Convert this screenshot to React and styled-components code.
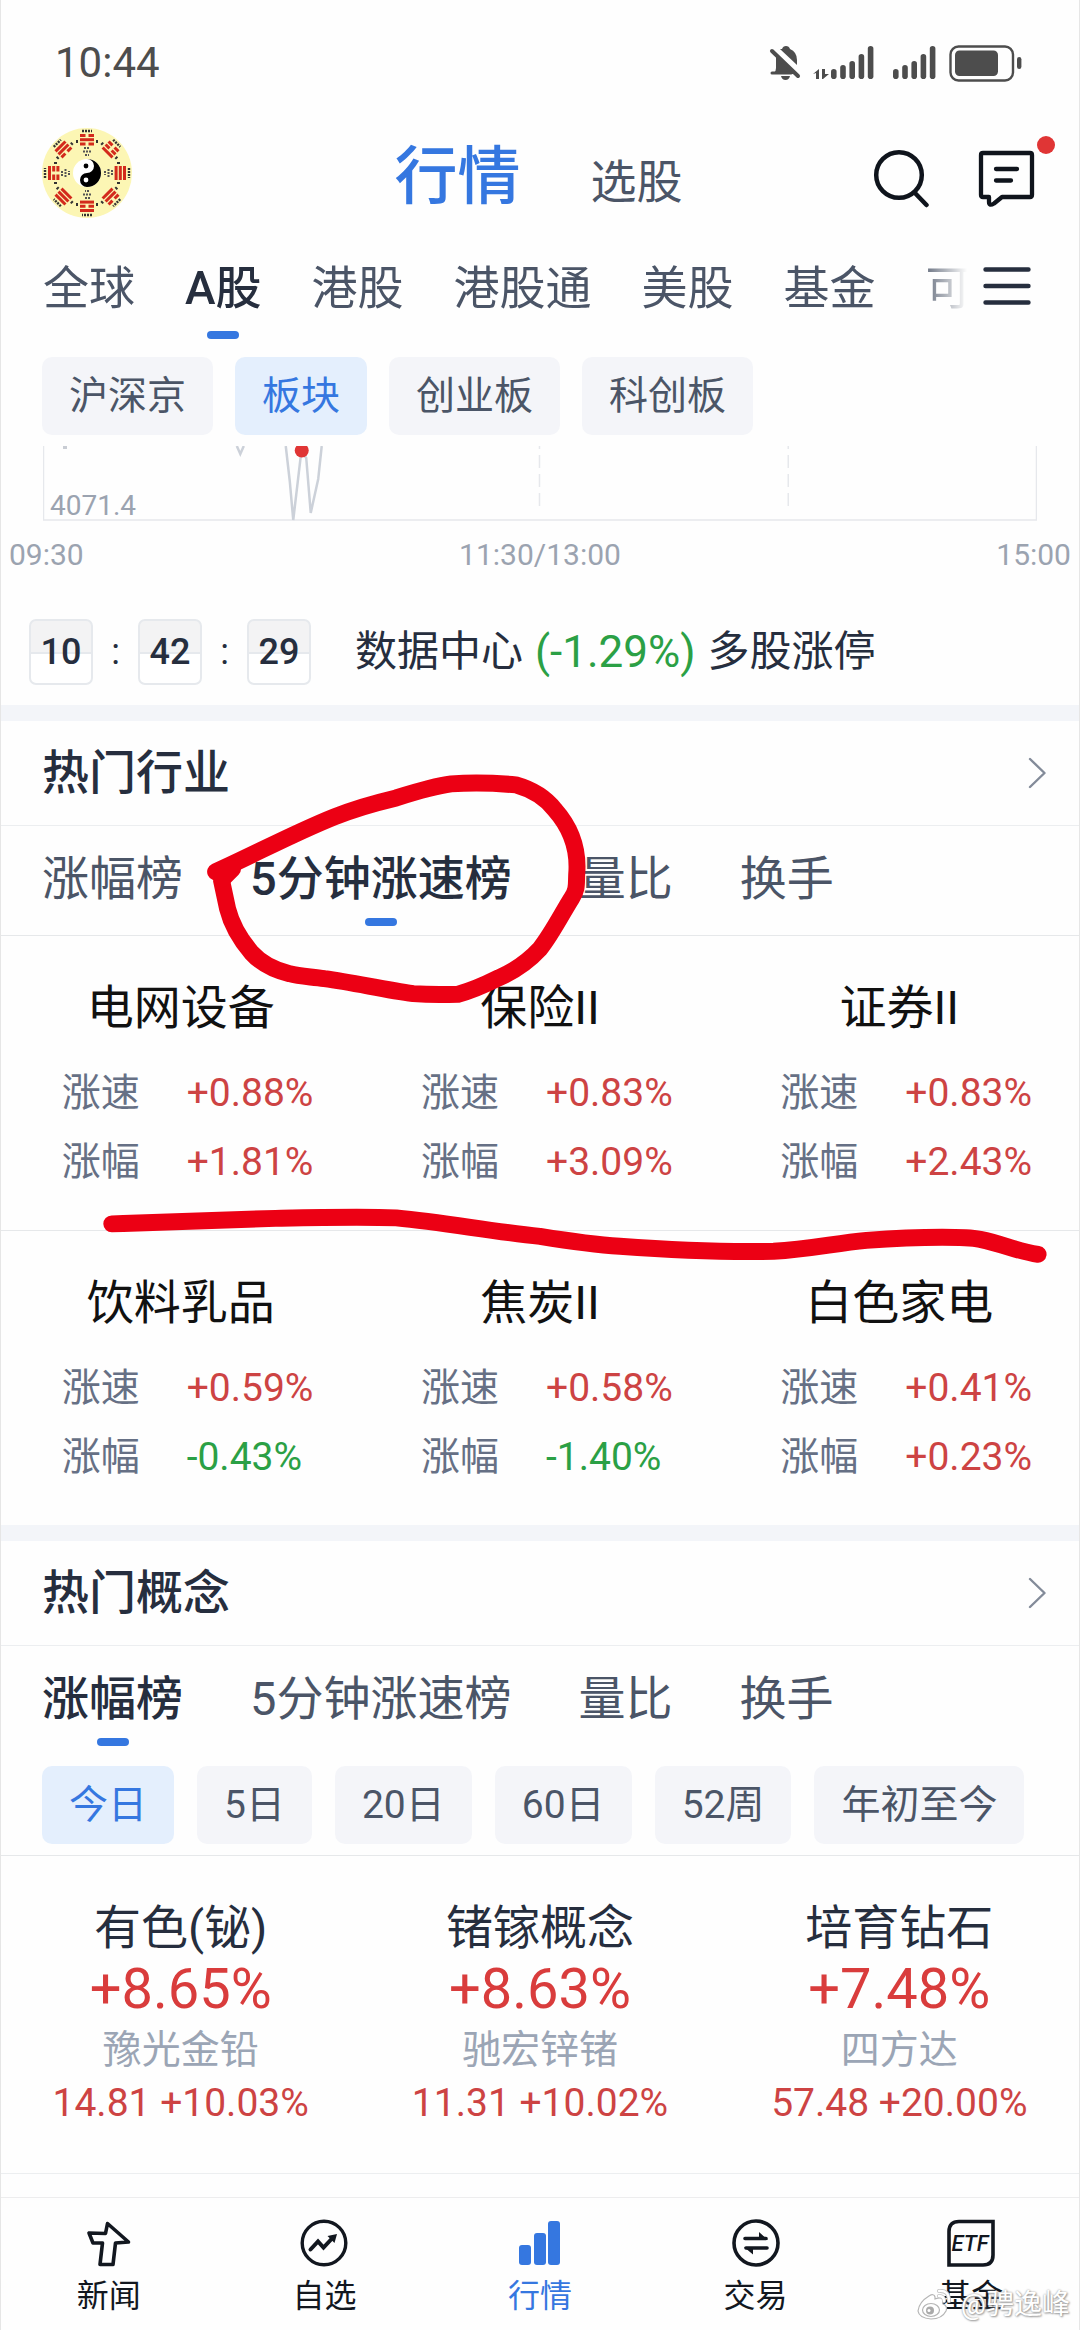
import styled, { createGlobalStyle } from "styled-components";

const markets = ["全球", "A股", "港股", "港股通", "美股", "基金", "可"];
const boards = ["沪深京", "板块", "创业板", "科创板"];
const rankings = ["涨幅榜", "5分钟涨速榜", "量比", "换手"];
const periods = ["今日", "5日", "20日", "60日", "52周", "年初至今"];

const industries = [
	{ name: "电网设备", speed: "+0.88%", change: "+1.81%" },
	{ name: "保险II", speed: "+0.83%", change: "+3.09%" },
	{ name: "证券II", speed: "+0.83%", change: "+2.43%" },
	{ name: "饮料乳品", speed: "+0.59%", change: "-0.43%" },
	{ name: "焦炭II", speed: "+0.58%", change: "-1.40%" },
	{ name: "白色家电", speed: "+0.41%", change: "+0.23%" },
];

const concepts = [
	{ name: "有色(铋)", change: "+8.65%", stock: "豫光金铅", quote: "14.81 +10.03%" },
	{ name: "锗镓概念", change: "+8.63%", stock: "驰宏锌锗", quote: "11.31 +10.02%" },
	{ name: "培育钻石", change: "+7.48%", stock: "四方达", quote: "57.48 +20.00%" },
];

// three lines per trigram, 1 = solid, 0 = broken, clockwise from the top
const trigrams = ["010", "001", "111", "011", "101", "111", "100", "110"];

const statusIcons = (
	<svg width="254" height="40" viewBox="770 42 254 40" fill="#4d4d4d">
		<path d="M783 48 q1 -3 4 -3 q3 0 4 3 q7 3 7 11 v5 L781 48 z" />
		<path d="M775 72 q2 -2 2 -5 V55 L795 73 H773 z" />
		<path d="M773 50 L799 75" stroke="#4d4d4d" strokeWidth="4" strokeLinecap="round" />
		<path d="M773 72 H792" stroke="#4d4d4d" strokeWidth="3" strokeLinecap="round" />
		<path d="M782 75 h9 q-1 4 -4.500 4 q-3.500 0 -4.500 -4 z" />
		<path d="M814 73 l6 -5 v10 h-3 v-6 z M823 68 h3 v5 h4 l-6 5 h-1 z" />
		{[832, 894].map((x) =>
			[10, 14, 18, 25, 33].map((h, i) => (
				<rect key={x + i} x={x + i * 9.2} y={78 - h} width="5.600" height={h} rx="2.800" />
			))
		)}
		<rect x="951.500" y="45.500" width="62.500" height="34" rx="8" fill="none" stroke="#4d4d4d" strokeWidth="2.400" />
		<rect x="956" y="49.500" width="43" height="25.500" rx="4.500" />
		<rect x="1018" y="56" width="4.400" height="12" rx="2.200" />
	</svg>
);

const baguaAvatar = (
	<svg width="90" height="90" viewBox="-45 -45 90 90">
		<circle r="45" fill="#fcf6b4" />
		{trigrams.map((lines, i) => (
			<g key={i} transform={`rotate(${i * 45})`}>
				{lines.split("").map((line, j) =>
					line === "1" ? (
						<rect key={j} x="-7" y={-39 + j * 4.2} width="14" height="3" fill="#d32a1c" />
					) : (
						<path key={j} d={`M-7 ${-37.5 + j * 4.2} h5.500 m3 0 h5.500`} stroke="#d32a1c" strokeWidth="3" />
					)
				)}
				<path d="M-5 -42 h10" stroke="#333" strokeWidth="2.400" strokeDasharray="2 1" />
				<path d="M-10 -33 v3 M10 -33 v3" stroke="#333" strokeWidth="2" />
				{i % 2 === 0 && (
					<path d="M-3 -25 h6 M-4 -21.500 h8 M-2 -18 h4" stroke="#555" strokeWidth="2" strokeDasharray="2 1" />
				)}
			</g>
		))}
		<circle r="14" fill="#fff" />
		<path d="M0 -14 a14 14 0 0 1 0 28 a7 7 0 0 1 0 -14 a7 7 0 0 0 0 -14" fill="#000" />
		<circle cx="-1" cy="-7" r="2.400" fill="#000" />
		<circle cx="-1" cy="7" r="2.400" fill="#fff" />
	</svg>
);

const searchIcon = (
	<svg width="57" height="60" viewBox="0 0 57 60" fill="none" stroke="#0f141c" strokeWidth="4.500" strokeLinecap="round">
		<circle cx="26" cy="27" r="22.800" />
		<path d="M41.500 44.500 L53.500 57" />
	</svg>
);

const messageIcon = (
	<svg width="57" height="60" viewBox="0 0 57 60" fill="none" stroke="#0f141c" strokeWidth="4.300" strokeLinecap="round" strokeLinejoin="round">
		<path d="M5 5 H52 Q54 5 54 7 V47 Q54 49 52 49 H24 L16 55.500 Q11 58.500 11 54 V49 H5 Q3 49 3 47 V7 Q3 5 5 5 Z" />
		<path d="M18 21 H39 M18 32.500 H33" />
	</svg>
);

const menuIcon = (
	<svg width="48" height="38" viewBox="0 0 48 38" stroke="#262e3e" strokeWidth="4.400" strokeLinecap="round">
		<path d="M2.500 2.500 H45.500 M2.500 19 H45.500 M2.500 35.500 H45.500" />
	</svg>
);

const chevron = (
	<svg width="18" height="32" viewBox="0 0 18 32" fill="none" stroke="#838b99" strokeWidth="2.400" strokeLinecap="round" strokeLinejoin="round">
		<path d="M2 2 L16.500 16 L2 30" />
	</svg>
);

const newsIcon = (
	<svg width="48" height="48" viewBox="0 0 48 48" fill="none" stroke="#12171f" strokeWidth="3.600" strokeLinejoin="round">
		<path d="M22.500 4.500 L43.500 23 L30.500 24 L28 45.500 H15 L17.500 24 H8 L4 14 L20.500 14.500 Z" />
	</svg>
);

const watchIcon = (
	<svg width="48" height="48" viewBox="0 0 48 48" fill="none" stroke="#12171f" strokeWidth="3.400">
		<circle cx="24" cy="24" r="21.800" />
		<path d="M10.500 30.500 L18 22.500 L23.500 28.500 L32 19.500" strokeWidth="4" strokeLinecap="round" />
		<path d="M27.500 17 L37 15 L34.500 24 Z" fill="#12171f" stroke="none" />
	</svg>
);

const quotesIcon = (
	<svg width="48" height="48" viewBox="0 0 48 48" fill="#3577e0">
		<rect x="3" y="26" width="12" height="20" rx="3" />
		<rect x="18" y="14" width="12" height="32" rx="3" />
		<rect x="32" y="2" width="12" height="44" rx="3" />
	</svg>
);

const tradeIcon = (
	<svg width="48" height="48" viewBox="0 0 48 48" fill="none" stroke="#12171f" strokeWidth="3.600">
		<circle cx="24" cy="24" r="22" />
		<path d="M13 19.500 H34 M14 29 H35" strokeLinecap="round" />
		<path d="M27 13 L36 21 H27 Z M21 35.500 L12 28 H21 Z" fill="#12171f" stroke="none" />
	</svg>
);

const fundIcon = (
	<svg width="48" height="48" viewBox="0 0 48 48" fill="none" stroke="#12171f" strokeWidth="3.600">
		<path d="M12 2.500 H46 V36 Q46 46 36 46 H2 V12.500 Q2 2.500 12 2.500 Z" />
		<text x="23" y="32" textAnchor="middle" fontSize="22" fontStyle="italic" fontWeight="500" fill="#12171f" stroke="none">
			ETF
		</text>
	</svg>
);

const weiboIcon = (
	<svg width="36" height="32" viewBox="0 0 36 32" fill="none">
		<path d="M13 7 q5 -3 6 1 q0 2 0 2 q8 -3 8 2 q-1 2 0 3 q5 2 3 7 q-4 8 -15 8 q-12 -1 -13 -8 q1 -9 11 -15 z" fill="#fff" stroke="#b5b5b5" strokeWidth="1.200" />
		<ellipse cx="15" cy="21" rx="8.500" ry="6.500" fill="#fff" stroke="#b5b5b5" strokeWidth="1.200" />
		<circle cx="14" cy="21.500" r="4" fill="#aaa" />
		<circle cx="13" cy="21.500" r="1.500" fill="#fff" />
		<path d="M23 2 q10 -1 10 10 M23 7 q5 0 5 5" stroke="#c4c4c4" strokeWidth="4" strokeLinecap="round" />
		<path d="M23 2 q10 -1 10 10 M23 7 q5 0 5 5" stroke="#fff" strokeWidth="2.400" strokeLinecap="round" />
	</svg>
);

const tabs = [
	{ label: "新闻", icon: newsIcon },
	{ label: "自选", icon: watchIcon },
	{ label: "行情", icon: quotesIcon },
	{ label: "交易", icon: tradeIcon },
	{ label: "基金", icon: fundIcon },
];

function ChipRow({ items, active, gap = 22 }) {
	return (
		<Chips $gap={gap}>
			{items.map((item) => (
				<Chip key={item} type="button" $active={item === active}>
					{item}
				</Chip>
			))}
		</Chips>
	);
}

function Section({ title, active, children }) {
	return (
		<Panel>
			<PanelHead>
				<h2>{title}</h2>
				<IconButton type="button" aria-label={title}>
					{chevron}
				</IconButton>
			</PanelHead>
			<RankTabs>
				{rankings.map((item) => (
					<RankTab key={item} type="button" $active={item === active}>
						{item}
					</RankTab>
				))}
			</RankTabs>
			{children}
		</Panel>
	);
}

function Metric({ label, value }) {
	return (
		<MetricRow>
			<dt>{label}</dt>
			<MetricValue $down={value.startsWith("-")}>{value}</MetricValue>
		</MetricRow>
	);
}

function App() {
	return (
		<Page>
			<GlobalStyle />
			<StatusBar>
				<Clock>10:44</Clock>
				{statusIcons}
			</StatusBar>

			<Header>
				{baguaAvatar}
				<Titles>
					<Title type="button" $active>
						行情
					</Title>
					<Title type="button">选股</Title>
				</Titles>
				<Actions>
					<IconButton type="button" aria-label="搜索">
						{searchIcon}
					</IconButton>
					<IconButton type="button" aria-label="消息">
						{messageIcon}
						<Dot />
					</IconButton>
				</Actions>
			</Header>

			<MarketBar>
				<MarketTabs>
					{markets.map((item) => (
						<MarketTab key={item} type="button" $active={item === "A股"}>
							{item}
						</MarketTab>
					))}
				</MarketTabs>
				<IconButton type="button" aria-label="菜单">
					{menuIcon}
				</IconButton>
			</MarketBar>

			<ChipRow items={boards} active="板块" />

			<Chart>
				<svg viewBox="0 0 995 75" preserveAspectRatio="none" fill="none">
					<path d="M0.500 0 V74 H994.500 V0" stroke="#e6e8ec" strokeWidth="1.500" />
					<path d="M497 0 V62 M746 0 V62" stroke="#e6e8ec" strokeWidth="1.500" strokeDasharray="13 6" strokeDashoffset="10" />
					<path d="M20 1.500 h4" stroke="#c9cdd4" strokeWidth="3" />
					<path d="M194 0 L197.500 8 L201 0" stroke="#ccd1d9" strokeWidth="2.500" />
					<path d="M243 0 L247 35 L250.500 74 L258.500 6 L263.500 12 L268 67 L275.500 33 L279 0" stroke="#ccd1d9" strokeWidth="2.500" />
					<circle cx="259" cy="4.500" r="7" fill="#e03535" />
				</svg>
				<LowValue>4071.4</LowValue>
			</Chart>
			<Axis>
				<span>09:30</span>
				<span>11:30/13:00</span>
				<span>15:00</span>
			</Axis>

			<Ticker>
				<FlipClock>
					<Digits>10</Digits>
					<Colon>:</Colon>
					<Digits>42</Digits>
					<Colon>:</Colon>
					<Digits>29</Digits>
				</FlipClock>
				<Headline>
					<span>数据中心</span>
					<em>(-1.29%)</em>
					<span>多股涨停</span>
				</Headline>
			</Ticker>

			<Section title="热门行业" active="5分钟涨速榜">
				<Grid>
					{industries.map((item) => (
						<Industry key={item.name}>
							<h3>{item.name}</h3>
							<dl>
								<Metric label="涨速" value={item.speed} />
								<Metric label="涨幅" value={item.change} />
							</dl>
						</Industry>
					))}
				</Grid>
				<Marker viewBox="0 704 1080 821" preserveAspectRatio="none">
					<path d="M215 871 C255 853 294 832 334 816 C356 807 375 802 396 797 C415 791 435 785 451 783 C475 781 495 782 516 784 C530 788 545 796 555 809 C571 827 578 848 577 870 C576 882 578 888 572 897 C563 911 552 933 540 948 C528 961 515 970 499 977 C485 984 472 990 458 993.500 C443 994 428 994 413 993 C383 989 354 982 324 978 C312 976 300 976 289 973 C272 969 260 962 251 952 C239 938 231 924 227 908 L221 880" />
					<path d="M222 878 L232 868" />
					<path d="M111 1223.500 C170 1222 230 1219 275 1218 C320 1217 360 1216 396 1217.500 C445 1222 490 1231 540 1236 C565 1240 590 1244 620 1246 C675 1250 725 1252 774 1251 C810 1249 835 1243 867 1240 C895 1238 920 1237 943 1237 C960 1237 970 1237 981 1239 C1005 1244 1018 1251 1039 1254" />
				</Marker>
			</Section>

			<Section title="热门概念" active="涨幅榜">
				<ChipRow items={periods} active="今日" gap={23} />
				<ConceptGrid>
					{concepts.map((item) => (
						<Concept key={item.name}>
							<h3>{item.name}</h3>
							<strong>{item.change}</strong>
							<span>{item.stock}</span>
							<p>{item.quote}</p>
						</Concept>
					))}
				</ConceptGrid>
			</Section>

			<TabBar>
				{tabs.map((tab) => (
					<TabLink key={tab.label} href="#" $active={tab.label === "行情"}>
						{tab.icon}
						{tab.label}
					</TabLink>
				))}
				<Watermark>
					{weiboIcon}
					@骋逸峰
				</Watermark>
			</TabBar>
		</Page>
	);
}

export default App;

const GlobalStyle = createGlobalStyle`
	* {
		box-sizing: border-box;
	}

	body, h2, h3, p, dl, dd {
		margin: 0;
	}

	body {
		background: #fff;
		font-family: Roboto, "Noto Sans CJK SC", sans-serif;
		color: #262e3e;
	}

	button {
		padding: 0;
		border: none;
		background: none;
		font-family: inherit;
		white-space: nowrap;
		cursor: pointer;
	}

	svg {
		display: block;
		flex-shrink: 0;
	}
`;

const Page = styled.div`
	border: solid #e6e6e6;
	border-width: 0 1px;
	background: #fefefe;
`;

const StatusBar = styled.div`
	display: flex;
	align-items: center;
	justify-content: space-between;
	padding: 38px 56px 39px 54px;
`;

const Clock = styled.time`
	font-size: 42px;
	line-height: 50px;
	color: #4d4d4d;
`;

const Header = styled.header`
	display: grid;
	grid-template-columns: 1fr auto 1fr;
	align-items: center;
	height: 91px;
	padding: 0 44px 0 41px;
`;

const Titles = styled.div`
	display: flex;
	align-items: baseline;
	gap: 70px;
	padding-top: 14px;
`;

const Title = styled.button`
	font-size: ${(props) => (props.$active ? "63px" : "46px")};
	line-height: 66px;
	font-weight: ${(props) => (props.$active ? 500 : 400)};
	color: ${(props) => (props.$active ? "#3577e0" : "#4b5567")};
`;

const Actions = styled.div`
	display: flex;
	justify-content: flex-end;
	gap: 48px;
	padding-top: 10px;
`;

const IconButton = styled.button`
	position: relative;
`;

const Dot = styled.span`
	position: absolute;
	top: -12px;
	right: -20px;
	width: 18px;
	height: 18px;
	border-radius: 50%;
	background: #e03535;
`;

const MarketBar = styled.nav`
	display: flex;
	align-items: center;
	gap: 16px;
	padding: 37px 48px 18px 42px;

	& > button {
		padding-bottom: 22px;
	}
`;

const MarketTabs = styled.div`
	display: flex;
	flex: 1;
	gap: 50px;
	overflow: hidden;
	mask-image: linear-gradient(to right, #000 calc(100% - 50px), transparent);
`;

const MarketTab = styled.button`
	position: relative;
	padding-bottom: 18px;
	font-size: 46px;
	line-height: 66px;
	font-weight: ${(props) => (props.$active ? 500 : 400)};
	color: ${(props) => (props.$active ? "#262e3e" : "#4b5567")};

	&::after {
		content: "";
		position: absolute;
		left: calc(50% - 16px);
		bottom: 0;
		width: 32px;
		height: 8px;
		border-radius: 4px;
		background: ${(props) => (props.$active ? "#3577e0" : "transparent")};
	}
`;

const RankTab = styled(MarketTab)`
	padding-bottom: 14px;
	font-size: 47px;
`;

const Chips = styled.div`
	display: flex;
	gap: ${(props) => props.$gap}px;
	padding: 0 41px 11px;
`;

const Chip = styled.button`
	padding: 0 27px;
	border-radius: 10px;
	font-size: 39px;
	line-height: 78px;
	background: ${(props) => (props.$active ? "#e4effd" : "#f4f5f9")};
	color: ${(props) => (props.$active ? "#3577e0" : "#4b5567")};
`;

const Chart = styled.div`
	position: relative;
	margin: 0 42px;

	svg {
		width: 100%;
		height: 75px;
	}
`;

const LowValue = styled.span`
	position: absolute;
	left: 7px;
	bottom: 0;
	font-size: 28px;
	line-height: 30px;
	color: #9ba3b0;
`;

const Axis = styled.div`
	display: flex;
	justify-content: space-between;
	padding: 19px 8px 49px;
	font-size: 30px;
	line-height: 30px;
	color: #9ba3b0;
`;

const Ticker = styled.div`
	display: flex;
	align-items: center;
	gap: 44px;
	padding: 0 28px 20px;
`;

const FlipClock = styled.div`
	display: flex;
	align-items: center;
`;

const Digits = styled.span`
	width: 64px;
	border: 2px solid #e6e9ed;
	border-radius: 7px;
	font-size: 36px;
	line-height: 62px;
	font-weight: 500;
	text-align: center;
	background: linear-gradient(#f3f3f4 50%, #e6e9ed 50%, #e6e9ed 53%, #fff 53%);
`;

const Colon = styled.span`
	width: 45px;
	font-size: 36px;
	text-align: center;
`;

const Headline = styled.p`
	display: flex;
	gap: 12px;
	font-size: 42px;
	line-height: 66px;

	em {
		font-size: 44px;
		font-style: normal;
		color: #2ba045;
	}
`;

const Panel = styled.section`
	position: relative;
	border-top: 16px solid #f3f5f9;
`;

const PanelHead = styled.div`
	display: flex;
	align-items: center;
	justify-content: space-between;
	padding: 0 33px 0 41px;
	border-bottom: 1px solid #eceef0;

	h2 {
		font-size: 47px;
		line-height: 104px;
		font-weight: 500;
	}
`;

const RankTabs = styled.div`
	display: flex;
	gap: 67px;
	padding: 20px 41px;
`;

const Grid = styled.div`
	display: grid;
	grid-template-columns: repeat(3, 1fr);
	margin-top: -11px;
	border-top: 1px solid #e6e8ea;
`;

const Industry = styled.article`
	padding: 42px 0 33px;
	border-bottom: 1px solid #e6e8ea;

	&:nth-last-child(-n + 3) {
		border-bottom: none;
	}

	h3 {
		margin-bottom: 21px;
		font-size: 47px;
		line-height: 60px;
		font-weight: 400;
		text-align: center;
		color: #111;
	}
`;

const MetricRow = styled.div`
	display: flex;
	justify-content: center;
	gap: 47px;
	padding-left: 15px;
	font-size: 39px;
	line-height: 69px;

	dt {
		color: #667085;
	}
`;

const MetricValue = styled.dd`
	width: 128px;
	white-space: nowrap;
	color: ${(props) => (props.$down ? "#2ba045" : "#cd4343")};
`;

const Marker = styled.svg`
	position: absolute;
	top: -16px;
	left: 0;
	width: 100%;
	height: calc(100% + 16px);
	fill: none;
	stroke: #ec0014;
	stroke-width: 17px;
	stroke-linecap: round;
	stroke-linejoin: round;
	pointer-events: none;
`;

const ConceptGrid = styled(Grid)`
	margin: 0 0 23px;
	border-bottom: 1px solid #eceef0;
`;

const Concept = styled.article`
	display: flex;
	flex-direction: column;
	align-items: center;
	padding: 42px 0 47px;

	h3 {
		font-size: 47px;
		line-height: 60px;
		font-weight: 400;
	}

	strong {
		font-size: 56px;
		line-height: 62px;
		font-weight: 400;
		color: #d93c3c;
	}

	span {
		font-size: 39px;
		line-height: 60px;
		color: #9ba5b5;
	}

	p {
		font-size: 39px;
		line-height: 46px;
		color: #cd4343;
	}
`;

const TabBar = styled.nav`
	position: relative;
	display: grid;
	grid-template-columns: repeat(5, 1fr);
	padding: 21px 0 14px;
	border-top: 1px solid #ededee;
`;

const TabLink = styled.a`
	display: flex;
	flex-direction: column;
	align-items: center;
	gap: 9px;
	font-size: 32px;
	line-height: 40px;
	text-decoration: none;
	color: ${(props) => (props.$active ? "#3577e0" : "#12171f")};
`;

const Watermark = styled.span`
	position: absolute;
	right: 9px;
	bottom: 7px;
	display: flex;
	align-items: center;
	gap: 9px;
	font-size: 28px;
	line-height: 36px;
	color: #fff;
	text-shadow: 0 0 2px #999, 1px 1px 2px #999;
`;
